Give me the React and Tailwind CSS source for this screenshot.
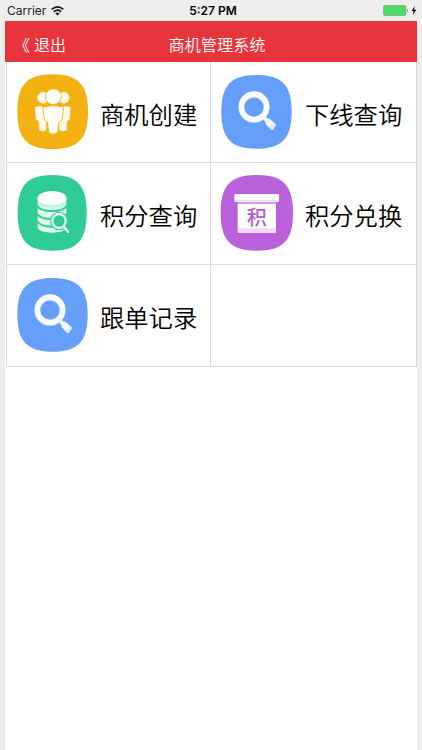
function PeopleIcon() {
  return (
    <svg className="h-20 w-[78px] shrink-0" viewBox="42 36 234 240">
      <path d="M158 43C235 43 264 75 264 155C264 236 235 267 158 267C81 267 52 236 52 155C52 75 81 43 158 43Z" fill="#f3b112" />
      <g fill="#fffaf0" stroke="#fbdc8c" strokeWidth="1.5">
        <circle cx="129" cy="113" r="17" />
        <circle cx="191" cy="113" r="17" />
        <path d="M105 142Q119 136 131 142L138 180V211Q128 216 118 211L116 184L108 177Z" />
        <path d="M211 142Q197 136 185 142L178 180V211Q189 216 200 211L201 184L209 177Z" />
      </g>
      <g fill="#fffdf8" stroke="#f3b112" strokeWidth="2.5">
        <circle cx="160" cy="110" r="24" />
        <path d="M128 141Q160 133 191 141L186 180L176 188L173 218Q160 227 146 218L143 188L133 180Z" />
      </g>
    </svg>
  );
}

function SearchIcon() {
  return (
    <svg className="h-20 w-[78px] shrink-0" viewBox="39 36 234 240">
      <path d="M155 45C231 45 260 76 260 155C260 235 231 266 155 266C78 266 49 235 49 155C49 76 78 45 155 45Z" fill="#669ffa" />
      <circle cx="147" cy="142" r="38" fill="none" stroke="#dceaff" strokeWidth="17" />
      <circle cx="147" cy="140" r="38" fill="none" stroke="#fafcff" strokeWidth="16" />
      <path d="M173 169L188 184" stroke="#eef5ff" strokeWidth="11" />
      <path d="M181 178L192 175L212 193V196L203 210H199L182 193Z" fill="#f0f6ff" />
      <path d="M212 193V196L203 210H199L193 204L206 188Z" fill="#dfebff" />
    </svg>
  );
}

function DatabaseIcon() {
  return (
    <svg className="h-20 w-[78px] shrink-0" viewBox="42 39 234 240">
      <path d="M157 45C232 45 260 77 260 158C260 240 232 272 157 272C81 272 53 240 53 158C53 77 81 45 157 45Z" fill="#30cc96" />
      <path d="M113 113H199V205Q190 218 156 218Q122 218 113 205Z" fill="#dcfbed" />
      <g fill="none" stroke="#30cc96" strokeWidth="6">
        <path d="M111 137Q121 153 156 153Q191 153 201 137" />
        <path d="M111 161Q121 177 156 177Q191 177 201 161" />
        <path d="M111 184Q121 200 156 200Q191 200 201 184" />
      </g>
      <path d="M113 113V127Q121 145 156 145Q191 145 199 127V113Z" fill="#c6f5e0" />
      <ellipse cx="156" cy="114" rx="43" ry="21" fill="#fcfffd" />
      <ellipse cx="177" cy="183" rx="27" ry="28" fill="#30cc96" />
      <path d="M191 199L205 215" stroke="#30cc96" strokeWidth="16" strokeLinecap="round" />
      <ellipse cx="177" cy="183" rx="20" ry="21" fill="#30cc96" stroke="#dcfbed" strokeWidth="7" />
      <path d="M191 200L204 215" stroke="#dcfbed" strokeWidth="8" strokeLinecap="round" />
    </svg>
  );
}

function PointsIcon() {
  return (
    <svg className="h-20 w-[78px] shrink-0" viewBox="39 39 234 240">
      <path d="M156 45C235 45 264 77 264 158C264 240 235 272 156 272C76 272 47 240 47 158C47 77 76 45 156 45Z" fill="#bb60db" />
      <rect x="98" y="122" width="115" height="96" rx="3" fill="#fff" />
      <path d="M99 205H212V215Q212 218 209 218H102Q99 218 99 215Z" fill="#efd9f8" />
      <path d="M98 129H213" stroke="#c981e3" strokeWidth="5" />
      <rect x="88" y="102" width="134" height="24" rx="4" fill="#fff" />
      <path d="M90 122H220" stroke="#efd9f8" strokeWidth="5" />
      <text
        x="155"
        y="194"
        textAnchor="middle"
        fill="#b65ad6"
        fontSize="60"
        className="font-['Noto_Sans_CJK_SC',sans-serif] font-medium"
      >
        积
      </text>
    </svg>
  );
}

const items = [
  { label: "商机创建", Icon: PeopleIcon },
  { label: "下线查询", Icon: SearchIcon },
  { label: "积分查询", Icon: DatabaseIcon },
  { label: "积分兑换", Icon: PointsIcon },
  { label: "跟单记录", Icon: SearchIcon },
  null,
];

function StatusBar() {
  return (
    <div className="grid h-[21px] grid-cols-3 items-center pr-[5px] pl-[7px] font-['Inter',sans-serif] text-xs font-normal text-[#222]">
      <div className="flex items-center gap-[5px]">
        <span>Carrier</span>
        <svg className="h-[10px] w-[13px]" viewBox="0 0 13 10" fill="none" stroke="#111" strokeWidth="1.7">
          <path d="M0.7 3.4Q6.5 -1.6 12.3 3.4" />
          <path d="M2.8 5.8Q6.5 2.6 10.2 5.8" />
          <path d="M6.5 9.6L4.3 7.3Q6.5 5.7 8.7 7.3Z" fill="#111" stroke="none" />
        </svg>
      </div>
      <span className="pl-[2px] text-center font-semibold whitespace-nowrap text-black">5:27 PM</span>
      <div className="flex items-center justify-end">
        <svg className="h-[11px] w-[34px]" viewBox="0 0 34 11">
          <rect x="0.5" y="0.5" width="22.5" height="10" rx="1.5" fill="#4cd964" stroke="#7b9c80" strokeWidth="0.6" />
          <path d="M24 3.8Q25.4 5.5 24 7.2Z" fill="#333" />
          <path d="M31.8 1L28.6 6H30.6L29.8 10L33.4 4.8H31.2Z" fill="#111" />
        </svg>
      </div>
    </div>
  );
}

export default function App() {
  return (
    <div className="flex h-[750px] w-[422px] flex-col overflow-hidden bg-[#eeeeee] font-['Noto_Sans_CJK_SC',sans-serif] font-[350]">
      <StatusBar />
      <div className="mr-[5px] ml-[5px] flex flex-1 flex-col bg-white">
        <header className="grid h-[41px] grid-cols-3 items-center bg-[#e8343b] pt-[5px] text-[16px] text-white">
          <span className="flex pl-[12px]">
            <span className="w-[17px] indent-[-3px]">《</span>
            <span>退出</span>
          </span>
          <span className="pl-[12px] text-center text-[16.2px] whitespace-nowrap">商机管理系统</span>
        </header>
        <div className="ml-px grid grid-cols-[204px_206px] grid-rows-[101px_102px_102px] border-l border-[#d9dadd]">
          {items.map((item, i) => (
            <div
              key={i}
              className="flex items-start gap-2 border-r border-b border-[#d9dadd] pt-[10px] pl-[7px] even:gap-[9px]"
            >
              {item && (
                <>
                  <item.Icon />
                  <span className="pt-[24px] text-[24.3px] leading-[36px] whitespace-nowrap text-black">
                    {item.label}
                  </span>
                </>
              )}
            </div>
          ))}
        </div>
      </div>
    </div>
  );
}
